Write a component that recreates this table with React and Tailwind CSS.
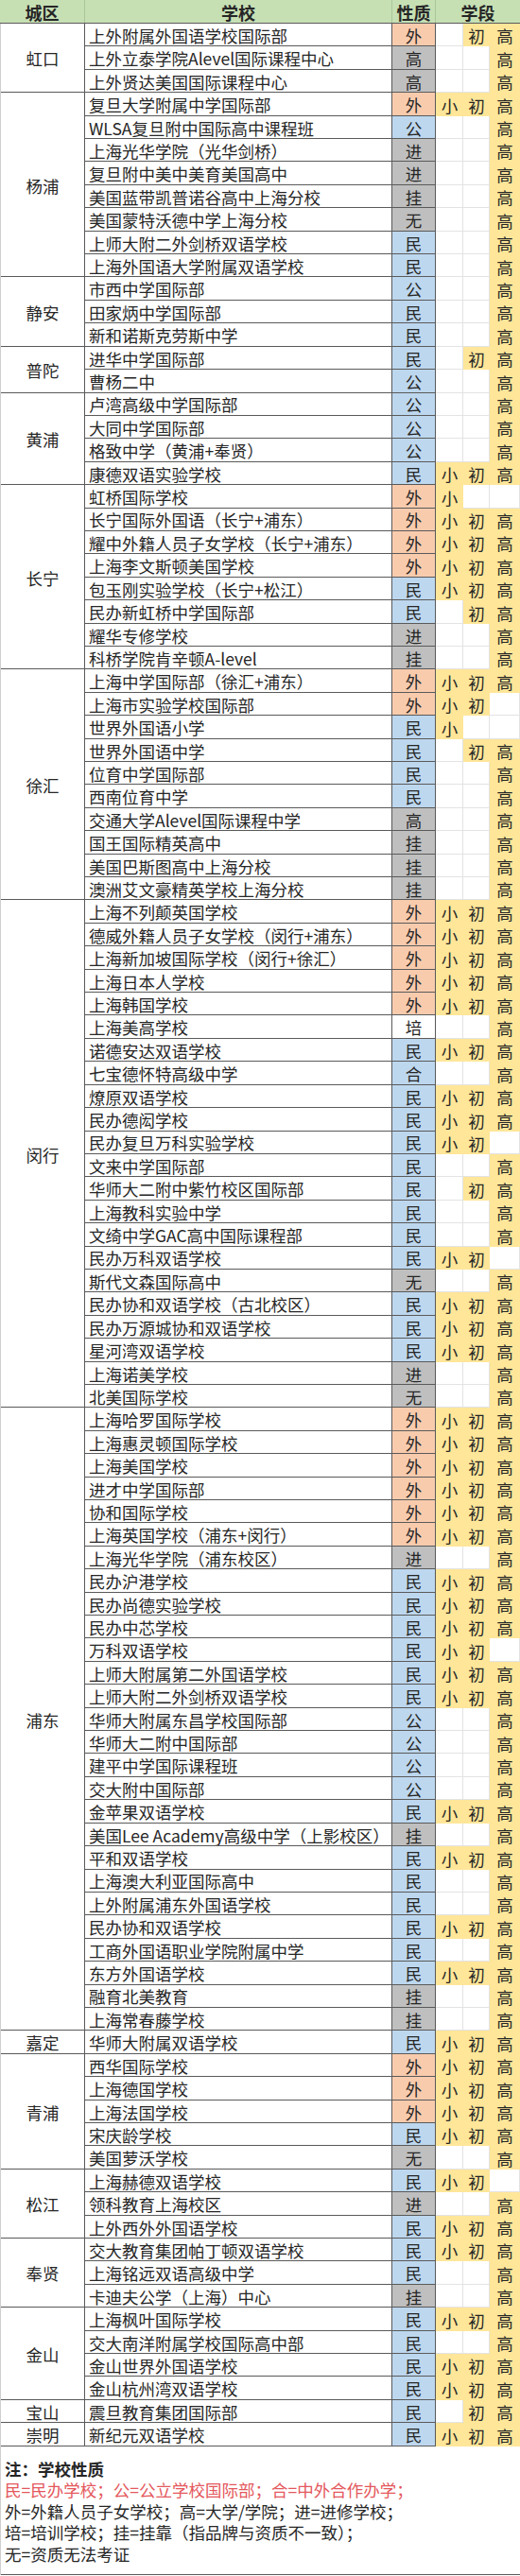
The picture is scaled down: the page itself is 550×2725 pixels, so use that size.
import React from 'react';

const DATA = [
  ['虹口', [
    ['上外附属外国语学校国际部', '外', '初高'],
    ['上外立泰学院Alevel国际课程中心', '高', '高'],
    ['上外贤达美国国际课程中心', '高', '高'],
  ]],
  ['杨浦', [
    ['复旦大学附属中学国际部', '外', '小初高'],
    ['WLSA复旦附中国际高中课程班', '公', '高'],
    ['上海光华学院（光华剑桥）', '进', '高'],
    ['复旦附中美中美育美国高中', '进', '高'],
    ['美国蓝带凯普诺谷高中上海分校', '挂', '高'],
    ['美国蒙特沃德中学上海分校', '无', '高'],
    ['上师大附二外剑桥双语学校', '民', '高'],
    ['上海外国语大学附属双语学校', '民', '高'],
  ]],
  ['静安', [
    ['市西中学国际部', '公', '高'],
    ['田家炳中学国际部', '民', '高'],
    ['新和诺斯克劳斯中学', '民', '高'],
  ]],
  ['普陀', [
    ['进华中学国际部', '民', '初高'],
    ['曹杨二中', '公', '高'],
  ]],
  ['黄浦', [
    ['卢湾高级中学国际部', '公', '高'],
    ['大同中学国际部', '公', '高'],
    ['格致中学（黄浦+奉贤）', '公', '高'],
    ['康德双语实验学校', '民', '小初高'],
  ]],
  ['长宁', [
    ['虹桥国际学校', '外', '小'],
    ['长宁国际外国语（长宁+浦东）', '外', '小初高'],
    ['耀中外籍人员子女学校（长宁+浦东）', '外', '小初高'],
    ['上海李文斯顿美国学校', '外', '小初高'],
    ['包玉刚实验学校（长宁+松江）', '民', '小初高'],
    ['民办新虹桥中学国际部', '民', '初高'],
    ['耀华专修学校', '进', '高'],
    ['科桥学院肯辛顿A-level', '挂', '高'],
  ]],
  ['徐汇', [
    ['上海中学国际部（徐汇+浦东）', '外', '小初高'],
    ['上海市实验学校国际部', '外', '小初'],
    ['世界外国语小学', '民', '小'],
    ['世界外国语中学', '民', '初高'],
    ['位育中学国际部', '民', '高'],
    ['西南位育中学', '民', '高'],
    ['交通大学Alevel国际课程中学', '高', '高'],
    ['国王国际精英高中', '挂', '高'],
    ['美国巴斯图高中上海分校', '挂', '高'],
    ['澳洲艾文豪精英学校上海分校', '挂', '高'],
  ]],
  ['闵行', [
    ['上海不列颠英国学校', '外', '小初高'],
    ['德威外籍人员子女学校（闵行+浦东）', '外', '小初高'],
    ['上海新加坡国际学校（闵行+徐汇）', '外', '小初高'],
    ['上海日本人学校', '外', '小初高'],
    ['上海韩国学校', '外', '小初高'],
    ['上海美高学校', '培', '高'],
    ['诺德安达双语学校', '民', '小初高'],
    ['七宝德怀特高级中学', '合', '高'],
    ['燎原双语学校', '民', '小初高'],
    ['民办德闳学校', '民', '小初高'],
    ['民办复旦万科实验学校', '民', '小初'],
    ['文来中学国际部', '民', '高'],
    ['华师大二附中紫竹校区国际部', '民', '初高'],
    ['上海教科实验中学', '民', '高'],
    ['文绮中学GAC高中国际课程部', '民', '高'],
    ['民办万科双语学校', '民', '小初'],
    ['斯代文森国际高中', '无', '高'],
    ['民办协和双语学校（古北校区）', '民', '小初高'],
    ['民办万源城协和双语学校', '民', '小初高'],
    ['星河湾双语学校', '民', '小初高'],
    ['上海诺美学校', '进', '高'],
    ['北美国际学校', '无', '高'],
  ]],
  ['浦东', [
    ['上海哈罗国际学校', '外', '小初高'],
    ['上海惠灵顿国际学校', '外', '小初高'],
    ['上海美国学校', '外', '小初高'],
    ['进才中学国际部', '外', '小初高'],
    ['协和国际学校', '外', '小初高'],
    ['上海英国学校（浦东+闵行）', '外', '小初高'],
    ['上海光华学院（浦东校区）', '进', '高'],
    ['民办沪港学校', '民', '小初高'],
    ['民办尚德实验学校', '民', '小初高'],
    ['民办中芯学校', '民', '小初高'],
    ['万科双语学校', '民', '小初'],
    ['上师大附属第二外国语学校', '民', '小初高'],
    ['上师大附二外剑桥双语学校', '民', '小初高'],
    ['华师大附属东昌学校国际部', '公', '高'],
    ['华师大二附中国际部', '公', '高'],
    ['建平中学国际课程班', '公', '高'],
    ['交大附中国际部', '公', '高'],
    ['金苹果双语学校', '民', '小初高'],
    ['美国Lee Academy高级中学（上影校区）', '挂', '高'],
    ['平和双语学校', '民', '小初高'],
    ['上海澳大利亚国际高中', '民', '高'],
    ['上外附属浦东外国语学校', '民', '高'],
    ['民办协和双语学校', '民', '小初高'],
    ['工商外国语职业学院附属中学', '民', '高'],
    ['东方外国语学校', '民', '小初高'],
    ['融育北美教育', '挂', '高'],
    ['上海常春藤学校', '挂', '高'],
  ]],
  ['嘉定', [
    ['华师大附属双语学校', '民', '小初高'],
  ]],
  ['青浦', [
    ['西华国际学校', '外', '小初高'],
    ['上海德国学校', '外', '小初高'],
    ['上海法国学校', '外', '小初高'],
    ['宋庆龄学校', '民', '小初高'],
    ['美国萝沃学校', '无', '高'],
  ]],
  ['松江', [
    ['上海赫德双语学校', '民', '小初'],
    ['领科教育上海校区', '进', '高'],
    ['上外西外外国语学校', '民', '小初高'],
  ]],
  ['奉贤', [
    ['交大教育集团帕丁顿双语学校', '民', '小初高'],
    ['上海铭远双语高级中学', '民', '高'],
    ['卡迪夫公学（上海）中心', '挂', '高'],
  ]],
  ['金山', [
    ['上海枫叶国际学校', '民', '小初高'],
    ['交大南洋附属学校国际高中部', '民', '高'],
    ['金山世界外国语学校', '民', '小初高'],
    ['金山杭州湾双语学校', '民', '小初高'],
  ]],
  ['宝山', [
    ['震旦教育集团国际部', '民', '初高'],
  ]],
  ['崇明', [
    ['新纪元双语学校', '民', '小初高'],
  ]],
];

const TYPE_BG = {
  外: 'bg-[#f8cbad]',
  高: 'bg-[#bfbfbf]',
  进: 'bg-[#bfbfbf]',
  挂: 'bg-[#bfbfbf]',
  无: 'bg-[#bfbfbf]',
  公: 'bg-[#bdd7ee]',
  民: 'bg-[#bdd7ee]',
  合: 'bg-[#bdd7ee]',
  培: 'bg-white',
};

function Stage({ on, label, width }) {
  return (
    <div
      className={
        width +
        ' flex items-center justify-center pt-[2px] ' +
        (on ? 'bg-[#ffe699]' : 'bg-white shadow-[inset_-1px_-1px_0_#e3e3e3]')
      }
    >
      {on ? label : ''}
    </div>
  );
}

function Row({ name, type, st }) {
  return (
    <div className="flex h-[24.42px]">
      <div className="w-[325px] shrink-0 border-r border-b border-[#5a5a5a] pl-[4px] pt-[2px] flex items-center whitespace-nowrap overflow-hidden">
        {name}
      </div>
      <div
        className={
          'w-[46px] shrink-0 border-r border-b border-[#5a5a5a] pt-[2px] flex items-center justify-center ' +
          TYPE_BG[type]
        }
      >
        {type}
      </div>
      <Stage on={st.includes('小')} label="小" width="w-[29px] shrink-0" />
      <Stage on={st.includes('初')} label="初" width="w-[28px] shrink-0" />
      <Stage on={st.includes('高')} label="高" width="w-[32px] shrink-0" />
    </div>
  );
}

export default function App() {
  return (
    <div className="w-[550px] h-[2725px] bg-white text-[#262626] font-['Noto_Sans_CJK_SC',sans-serif] text-[17.5px] leading-none overflow-hidden">
      <div className="flex h-[25px] bg-[#c6e0b4] border-b border-[#5a5a5a] font-bold text-[18px]">
        <div className="w-[90px] shrink-0 border-r border-[#a9c59a] flex items-center justify-center pt-[2px]">城区</div>
        <div className="w-[325px] shrink-0 border-r border-[#a9c59a] flex items-center justify-center pt-[2px]">学校</div>
        <div className="w-[46px] shrink-0 border-r border-[#a9c59a] flex items-center justify-center pt-[2px]">性质</div>
        <div className="flex-1 flex items-center justify-center pt-[2px]">学段</div>
      </div>
      <div className="border-l border-[#cfcfcf]">
        {DATA.map(([district, rows]) => (
          <div key={district} className="flex">
            <div className="w-[89px] shrink-0 border-r border-b border-[#5a5a5a] flex items-center justify-center pt-[2px]">
              {district}
            </div>
            <div className="flex flex-col">
              {rows.map(([name, type, st]) => (
                <Row key={district + name} name={name} type={type} st={st} />
              ))}
            </div>
          </div>
        ))}
        <div className="h-[136px] border-b border-[#5a5a5a] pt-[13px] pl-[4px] text-[17.5px] leading-[22.5px]">
          <div className="font-bold">注：学校性质</div>
          <div className="text-[#e4575c]">民=民办学校；公=公立学校国际部；合=中外合作办学；</div>
          <div>外=外籍人员子女学校；高=大学/学院；进=进修学校；</div>
          <div>培=培训学校；挂=挂靠（指品牌与资质不一致）；</div>
          <div>无=资质无法考证</div>
        </div>
      </div>
    </div>
  );
}
